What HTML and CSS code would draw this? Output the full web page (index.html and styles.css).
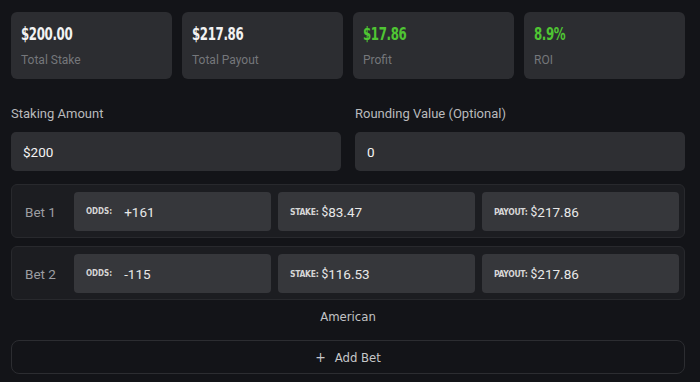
FILE: index.html
```html
<!DOCTYPE html>
<html lang="en">

<head>
    <meta charset="UTF-8">
    <meta name="viewport" content="width=device-width, initial-scale=1.0">
    <title>Bet Calculator</title>
    <link rel="stylesheet" href="styles.css">
</head>

<body>

    <div class="stats">
        <div class="stat">
            <p class="stat-value">$200.00</p>
            <p class="stat-label">Total Stake</p>
        </div>
        <div class="stat">
            <p class="stat-value">$217.86</p>
            <p class="stat-label">Total Payout</p>
        </div>
        <div class="stat">
            <p class="stat-value green">$17.86</p>
            <p class="stat-label">Profit</p>
        </div>
        <div class="stat">
            <p class="stat-value green">8.9%</p>
            <p class="stat-label">ROI</p>
        </div>
    </div>

    <div class="fields">
        <div>
            <p class="field-label">Staking Amount</p>
            <div class="field">$200</div>
        </div>
        <div>
            <p class="field-label">Rounding Value (Optional)</p>
            <div class="field">0</div>
        </div>
    </div>

    <div class="bets">
        <div class="bet">
            <span class="bet-name">Bet 1</span>
            <div class="bet-box"><span class="tag tag-odds">Odds:</span>+161</div>
            <div class="bet-box"><span class="tag">Stake:</span><span class="cur">$</span>83.47</div>
            <div class="bet-box"><span class="tag">Payout:</span><span class="cur">$</span>217.86</div>
        </div>
        <div class="bet">
            <span class="bet-name">Bet 2</span>
            <div class="bet-box"><span class="tag tag-odds">Odds:</span>-115</div>
            <div class="bet-box"><span class="tag">Stake:</span><span class="cur">$</span>116.53</div>
            <div class="bet-box"><span class="tag">Payout:</span><span class="cur">$</span>217.86</div>
        </div>
    </div>

    <p class="format">American</p>

    <button class="add-bet"><span class="plus">+</span>Add Bet</button>

</body>

</html>
```

FILE: styles.css
```css
body {
    font-family: Roboto, "Liberation Sans", sans-serif;
    margin: 0;
    padding: 12px 15px 0 11px;
    background-color: #131418;
    color: #e6e6e6;
}

p {
    margin: 0;
}

.stats {
    display: grid;
    grid-template-columns: repeat(4, 1fr);
    gap: 10px;
}

.stat {
    height: 67px;
    box-sizing: border-box;
    padding: 11px 10px 0 10px;
    background-color: #2c2d31;
    border-radius: 6px;
}

/* the numbers use a tall narrow face, squeeze the condensed one a bit more */
.stat-value {
    display: inline-block;
    font-family: "DejaVu Sans", sans-serif;
    font-stretch: condensed;
    font-weight: bold;
    font-size: 18px;
    line-height: 22px;
    letter-spacing: -0.5px;
    transform: scaleX(0.73);
    transform-origin: left center;
    color: #f2f2f2;
}

.stat-value.green {
    color: #4fc533;
}

.stat-label {
    margin-top: 7px;
    font-size: 12px;
    line-height: 16px;
    color: #75777b;
}

.fields {
    display: grid;
    grid-template-columns: 1fr 1fr;
    gap: 14px;
    margin-top: 27px;
}

.field-label {
    font-size: 13px;
    line-height: 16px;
    color: #b9babc;
    margin-bottom: 10px;
}

.field {
    height: 39px;
    box-sizing: border-box;
    padding: 0 12px;
    display: flex;
    align-items: center;
    background-color: #2e2f33;
    border-radius: 5px;
    font-size: 13.5px;
    color: #f4f4f4;
}

.bets {
    margin-top: 13px;
    display: flex;
    flex-direction: column;
    gap: 8px;
}

.bet {
    display: grid;
    grid-template-columns: 42px 1fr 1fr 1fr;
    gap: 7px;
    align-items: center;
    padding: 7px 5px 6px 13px;
    background-color: #1c1d21;
    border: 1px solid #28292d;
    border-radius: 6px;
}

.bet-name {
    font-size: 13.5px;
    color: #9d9ea1;
}

.bet-box {
    height: 39px;
    box-sizing: border-box;
    padding: 0 12px;
    display: flex;
    align-items: center;
    background-color: #36373b;
    border-radius: 4px;
    font-size: 13.5px;
    color: #e8e8e8;
}

.tag {
    font-family: "DejaVu Sans", sans-serif;
    font-stretch: condensed;
    font-size: 8.5px;
    font-weight: bold;
    letter-spacing: -0.3px;
    text-transform: uppercase;
    color: #d6d6d6;
    margin-right: 3px;
}

.tag-odds {
    font-size: 8px;
    letter-spacing: 0;
    margin-right: 12px;
}

.cur {
    font-size: 12px;
}

.format {
    margin-top: 7px;
    text-align: center;
    font-family: "DejaVu Sans", sans-serif;
    font-stretch: condensed;
    font-size: 13px;
    line-height: 20px;
    color: #c2c3c5;
}

.add-bet {
    display: flex;
    justify-content: center;
    align-items: center;
    width: 100%;
    height: 34px;
    margin-top: 13px;
    background: transparent;
    border: 1px solid #2c2d31;
    border-radius: 8px;
    font-family: "DejaVu Sans", sans-serif;
    font-stretch: condensed;
    font-size: 13px;
    color: #c6c7c9;
}

.plus {
    margin-right: 9px;
    font-size: 14px;
}
```
